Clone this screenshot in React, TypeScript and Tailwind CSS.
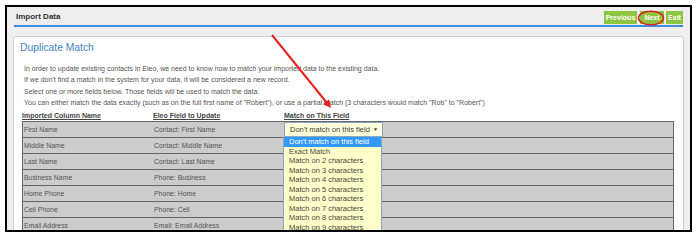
const rows = [
  ["First Name", "Contact: First Name"],
  ["Middle Name", "Contact: Middle Name"],
  ["Last Name", "Contact: Last Name"],
  ["Business Name", "Phone: Business"],
  ["Home Phone", "Phone: Home"],
  ["Cell Phone", "Phone: Cell"],
  ["Email Address", "Email: Email Address"],
];

const options = [
  "Don't match on this field",
  "Exact Match",
  "Match on 2 characters",
  "Match on 3 characters",
  "Match on 4 characters",
  "Match on 5 characters",
  "Match on 6 characters",
  "Match on 7 characters",
  "Match on 8 characters",
  "Match on 9 characters",
];

export default function App() {
  return (
    <div className="relative h-[240px] w-[699px] bg-white pl-[5px] pt-[5px] font-['Liberation_Sans',Arial,sans-serif]">
      <div className="h-[227px] w-[687px] overflow-hidden border-2 border-black bg-[#eeeeee]">
        {/* header bar */}
        <div className="mx-[7px] flex h-[20px] items-start justify-between border-b-2 border-[#3d8ddc]">
          <span className="mt-[5px] pl-[2px] text-[8px] font-bold leading-[10px] text-[#333]">Import Data</span>
          <div className="mt-[4px] flex gap-[2px]">
            <button className="h-[13px] w-[33px] bg-[#8dc63f] text-[7px] font-bold leading-[13px] text-white">Previous</button>
            <button className="ml-[1px] h-[13px] w-[24px] bg-[#8dc63f] text-[7px] font-bold leading-[13px] text-white">Next</button>
            <button className="h-[13px] w-[17px] bg-[#8dc63f] text-[7px] font-bold leading-[13px] text-white">Exit</button>
          </div>
        </div>

        {/* panel */}
        <div className="relative mx-[6px] mt-[9px] h-[220px] rounded-[3px] border border-[#cfcfcf] bg-white">
          <h2 className="pl-[6px] pt-[4px] text-[10.3px] leading-[13px] text-[#3d85c6]">Duplicate Match</h2>
          <div className="mt-[9px] pl-[10px] text-[7px] leading-[11.3px] text-[#555]">
            <p>In order to update existing contacts in Eleo, we need to know how to match your imported data to the existing data.</p>
            <p>If we don't find a match in the system for your data, it will be considered a new record.</p>
            <p>Select one or more fields below. Those fields will be used to match the data.</p>
            <p>You can either match the data exactly (such as on the full first name of "Robert"), or use a partial match (3 characters would match "Rob" to "Robert")</p>
          </div>

          <div className="ml-[8px] mr-[9px] mt-[3px]">
            <div className="grid h-[10px] grid-cols-[131px_131px_1fr] text-[7px] font-bold leading-[10px] text-[#444]">
              <span className="underline">Imported Column Name</span>
              <span className="underline">Eleo Field to Update</span>
              <span className="underline">Match on This Field</span>
            </div>
            <div className="border-x border-[#666]">
              {rows.map(([a, b], i) => (
                <div
                  key={a}
                  className="grid h-[16px] grid-cols-[131px_131px_1fr] items-center border-t border-[#666] bg-[#cccccc] text-[6.9px] text-[#555]"
                >
                  <span className="pl-[1px]">{a}</span>
                  <span>{b}</span>
                  <span className="relative h-full">
                    {i === 0 ? (
                      <span className="absolute left-[-1px] top-0 flex h-[15px] w-[99px] items-center justify-between border border-[#8aa6c1] bg-[#ffffdd] pl-[5px] pr-[4px] text-[7.5px] text-[#3c3a30]">
                        Don't match on this field
                        <span className="text-[5px]">▼</span>
                      </span>
                    ) : null}
                  </span>
                </div>
              ))}
            </div>
          </div>

          {/* open dropdown list */}
          <ul className="absolute left-[269px] top-[100px] w-[99px] border-x border-[#8aa6c1] bg-[#ffffcc] text-[7.5px] leading-[9.5px] text-[#4b4636]">
            {options.map((o, i) => (
              <li key={o} className={i === 0 ? "bg-[#3399ff] pl-[5px] text-white" : "pl-[5px]"}>
                {o}
              </li>
            ))}
          </ul>
        </div>
      </div>

      {/* annotations */}
      <svg className="pointer-events-none absolute left-0 top-0" width="699" height="240">
        <ellipse cx="651" cy="18" rx="12.5" ry="6.8" fill="none" stroke="#e21d1d" strokeWidth="1.5" />
        <line x1="272" y1="35" x2="327" y2="103" stroke="#e8201e" strokeWidth="2" />
        <polygon points="331,108 322.9,104.3 329.1,99.3" fill="#e8201e" />
      </svg>
    </div>
  );
}
